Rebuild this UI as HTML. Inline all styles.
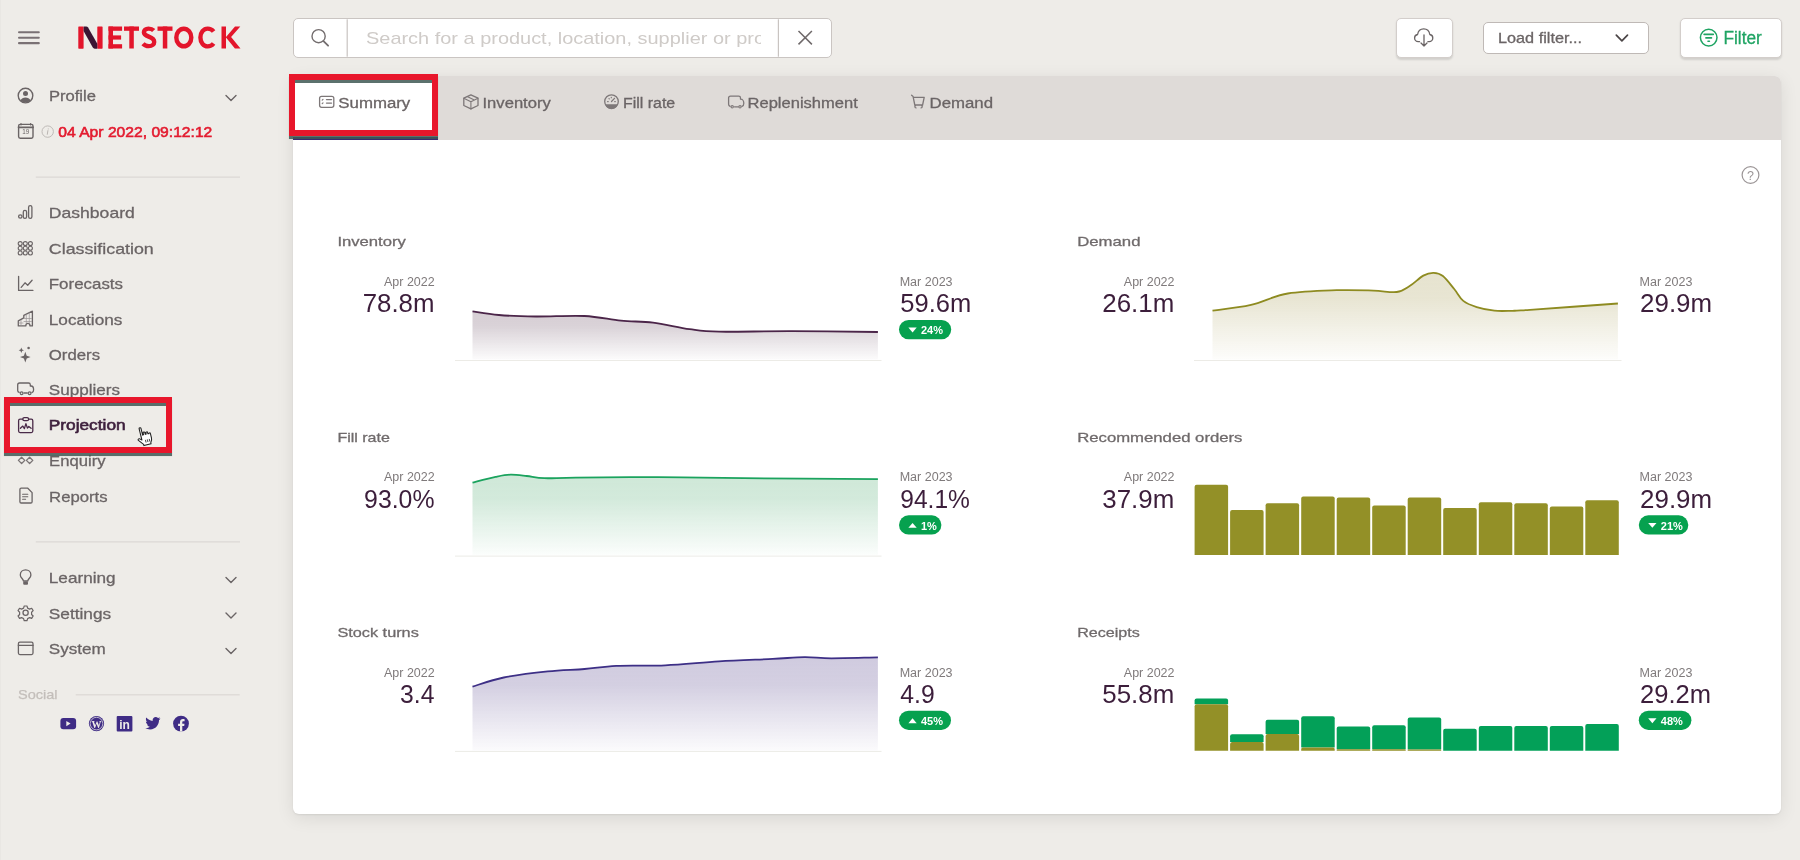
<!DOCTYPE html>
<html><head><meta charset="utf-8">
<style>
html,body{margin:0;padding:0;}
body{width:1800px;height:860px;overflow:hidden;background:#eeece8;position:relative;font-family:"Liberation Sans",sans-serif;}
.abs{position:absolute;}
#card{left:292.5px;top:76.3px;width:1488.8px;height:737.4px;background:#fff;border-radius:6px;box-shadow:0 1px 2px rgba(0,0,0,0.07), 0 4px 18px rgba(0,0,0,0.09);overflow:hidden;}
#tabbar{left:0;top:0;width:1489px;height:63.5px;background:#dfdbd8;}
#tabsum{left:0;top:0;width:145px;height:60.5px;background:#fff;}
#tabline{left:0;top:60.5px;width:145px;height:3px;background:#3b2870;}
.search{left:293px;top:18.3px;width:537.2px;height:37.6px;border:1.5px solid #cac5c2;border-radius:5px;background:#fff;}
.btn{background:#fff;border:1.3px solid #d3cecb;border-radius:5px;box-shadow:0 1.5px 2px rgba(0,0,0,0.12);}
#dl{left:1396.3px;top:17.8px;width:54.4px;height:38.6px;}
#flt{left:1680.4px;top:17.8px;width:99.4px;height:38.6px;}
#load{left:1483.3px;top:22.3px;width:163.5px;height:29.5px;border:1.3px solid #bfb9b6;border-radius:5px;background:#fff;}
.redbox{border:6px solid #e8162b;box-shadow:0 2.8px 0.6px rgba(62,88,84,0.85), inset 0 3px 0.6px rgba(62,88,84,0.85);}
#rb1{left:4px;top:397.3px;width:155.8px;height:44.2px;}
#rb2{left:289.2px;top:73.7px;width:136.8px;height:50.1px;}
svg{position:absolute;left:0;top:0;will-change:transform;}
</style></head>
<body>
<div class="abs" style="left:0;top:0;width:1px;height:860px;background:#e9e7e3"></div>
<div class="abs" id="card">
  <div class="abs" id="tabbar"></div>
  <div class="abs" id="tabsum"></div>
  <div class="abs" id="tabline"></div>
</div>
<div class="abs search"></div>
<div class="abs btn" id="dl"></div>
<div class="abs btn" id="flt"></div>
<div class="abs" id="load"></div>

<svg width="1800" height="860" viewBox="0 0 1800 860" font-family="Liberation Sans, sans-serif">
<defs><linearGradient id="g1" x1="0" y1="0" x2="0" y2="1"><stop offset="0" stop-color="#d6ced4"/><stop offset="0.3" stop-color="#d6ced4" stop-opacity="0.92"/><stop offset="1" stop-color="#d6ced4" stop-opacity="0.08"/></linearGradient><linearGradient id="g2" x1="0" y1="0" x2="0" y2="1"><stop offset="0" stop-color="#e6e3cf"/><stop offset="0.3" stop-color="#e6e3cf" stop-opacity="0.92"/><stop offset="1" stop-color="#e6e3cf" stop-opacity="0.08"/></linearGradient><linearGradient id="g3" x1="0" y1="0" x2="0" y2="1"><stop offset="0" stop-color="#cfe8d8"/><stop offset="0.3" stop-color="#cfe8d8" stop-opacity="0.92"/><stop offset="1" stop-color="#cfe8d8" stop-opacity="0.08"/></linearGradient><linearGradient id="g4" x1="0" y1="0" x2="0" y2="1"><stop offset="0" stop-color="#d0cbdf"/><stop offset="0.3" stop-color="#d0cbdf" stop-opacity="0.92"/><stop offset="1" stop-color="#d0cbdf" stop-opacity="0.08"/></linearGradient></defs>
<rect x="455" y="360.0" width="426.5" height="1" fill="#ecebe6"/>
<path d="M472.5 311.4 C476.9 312.0 488.4 314.1 498.9 315.0 C509.4 315.9 521.3 316.3 535.6 316.5 C549.9 316.7 570.3 315.3 584.5 316.0 C598.7 316.7 609.6 319.6 621.0 320.7 C632.4 321.8 641.6 321.2 653.0 322.6 C664.4 324.0 678.6 327.7 689.6 329.2 C700.6 330.7 701.9 331.4 719.0 331.7 C736.1 332.0 765.8 331.1 792.3 331.2 C818.8 331.2 863.6 331.9 877.9 332.0 L877.9 359.5 L472.5 359.5 Z" fill="url(#g1)"/>
<path d="M472.5 311.4 C476.9 312.0 488.4 314.1 498.9 315.0 C509.4 315.9 521.3 316.3 535.6 316.5 C549.9 316.7 570.3 315.3 584.5 316.0 C598.7 316.7 609.6 319.6 621.0 320.7 C632.4 321.8 641.6 321.2 653.0 322.6 C664.4 324.0 678.6 327.7 689.6 329.2 C700.6 330.7 701.9 331.4 719.0 331.7 C736.1 332.0 765.8 331.1 792.3 331.2 C818.8 331.2 863.6 331.9 877.9 332.0" fill="none" stroke="#4b2549" stroke-width="1.8"/>
<rect x="1194" y="360.0" width="427.5" height="1" fill="#ecebe6"/>
<path d="M1212.5 310.6 C1218.9 309.7 1238.5 307.8 1251.0 304.9 C1263.5 302.0 1273.5 295.9 1287.8 293.5 C1302.1 291.1 1322.4 290.7 1336.7 290.2 C1351.0 289.7 1363.4 290.3 1373.4 290.6 C1383.4 290.9 1390.6 292.8 1396.7 292.0 C1402.8 291.2 1405.6 288.5 1410.0 285.8 C1414.4 283.1 1419.4 277.8 1423.3 275.6 C1427.2 273.5 1430.3 272.8 1433.6 272.9 C1436.9 273.0 1439.4 273.3 1442.9 276.0 C1446.4 278.7 1451.0 285.2 1454.4 289.3 C1457.8 293.4 1459.6 297.9 1463.3 300.9 C1467.0 303.9 1471.5 305.5 1476.7 307.1 C1481.9 308.7 1488.5 310.1 1494.4 310.7 C1500.3 311.3 1506.3 310.9 1512.2 310.8 C1518.1 310.7 1512.4 311.0 1530.0 309.8 C1547.6 308.6 1603.2 304.6 1617.9 303.5 L1617.9 359.5 L1212.5 359.5 Z" fill="url(#g2)"/>
<path d="M1212.5 310.6 C1218.9 309.7 1238.5 307.8 1251.0 304.9 C1263.5 302.0 1273.5 295.9 1287.8 293.5 C1302.1 291.1 1322.4 290.7 1336.7 290.2 C1351.0 289.7 1363.4 290.3 1373.4 290.6 C1383.4 290.9 1390.6 292.8 1396.7 292.0 C1402.8 291.2 1405.6 288.5 1410.0 285.8 C1414.4 283.1 1419.4 277.8 1423.3 275.6 C1427.2 273.5 1430.3 272.8 1433.6 272.9 C1436.9 273.0 1439.4 273.3 1442.9 276.0 C1446.4 278.7 1451.0 285.2 1454.4 289.3 C1457.8 293.4 1459.6 297.9 1463.3 300.9 C1467.0 303.9 1471.5 305.5 1476.7 307.1 C1481.9 308.7 1488.5 310.1 1494.4 310.7 C1500.3 311.3 1506.3 310.9 1512.2 310.8 C1518.1 310.7 1512.4 311.0 1530.0 309.8 C1547.6 308.6 1603.2 304.6 1617.9 303.5" fill="none" stroke="#8e8b21" stroke-width="1.8"/>
<rect x="455" y="555.6" width="426.5" height="1" fill="#ecebe6"/>
<path d="M472.5 482.7 C476.4 481.7 489.2 478.2 495.6 476.9 C502.0 475.6 505.5 474.8 510.7 474.7 C515.9 474.6 521.1 475.4 526.7 476.0 C532.3 476.6 536.2 477.9 544.4 478.2 C552.5 478.5 556.7 477.8 575.6 477.6 C594.5 477.4 629.8 477.1 657.8 477.2 C685.8 477.3 706.7 477.9 743.4 478.2 C780.1 478.5 855.5 479.0 877.9 479.2 L877.9 555 L472.5 555 Z" fill="url(#g3)"/>
<path d="M472.5 482.7 C476.4 481.7 489.2 478.2 495.6 476.9 C502.0 475.6 505.5 474.8 510.7 474.7 C515.9 474.6 521.1 475.4 526.7 476.0 C532.3 476.6 536.2 477.9 544.4 478.2 C552.5 478.5 556.7 477.8 575.6 477.6 C594.5 477.4 629.8 477.1 657.8 477.2 C685.8 477.3 706.7 477.9 743.4 478.2 C780.1 478.5 855.5 479.0 877.9 479.2" fill="none" stroke="#1ba35e" stroke-width="1.8"/>
<rect x="455" y="750.9" width="426.5" height="1" fill="#ecebe6"/>
<path d="M472.5 686.6 C477.7 685.1 491.2 680.0 503.8 677.5 C516.4 675.0 534.3 672.8 547.8 671.4 C561.2 670.0 573.1 669.9 584.5 669.0 C595.9 668.1 602.8 666.4 616.3 665.8 C629.8 665.2 648.1 666.0 665.2 665.3 C682.3 664.6 701.1 662.5 719.0 661.4 C736.9 660.3 758.5 659.6 772.7 658.9 C787.0 658.2 794.7 657.3 804.5 657.2 C814.3 657.1 819.2 658.3 831.4 658.3 C843.6 658.3 870.1 657.5 877.9 657.4 L877.9 750.5 L472.5 750.5 Z" fill="url(#g4)"/>
<path d="M472.5 686.6 C477.7 685.1 491.2 680.0 503.8 677.5 C516.4 675.0 534.3 672.8 547.8 671.4 C561.2 670.0 573.1 669.9 584.5 669.0 C595.9 668.1 602.8 666.4 616.3 665.8 C629.8 665.2 648.1 666.0 665.2 665.3 C682.3 664.6 701.1 662.5 719.0 661.4 C736.9 660.3 758.5 659.6 772.7 658.9 C787.0 658.2 794.7 657.3 804.5 657.2 C814.3 657.1 819.2 658.3 831.4 658.3 C843.6 658.3 870.1 657.5 877.9 657.4" fill="none" stroke="#3d2f86" stroke-width="1.8"/>
<path d="M1194.6 555.1 V486.7 Q1194.6 484.7 1196.6 484.7 H1226.1 Q1228.1 484.7 1228.1 486.7 V555.1 Z" fill="#939027"/>
<path d="M1230.1 555.1 V512 Q1230.1 510 1232.1 510 H1261.6 Q1263.6 510 1263.6 512 V555.1 Z" fill="#939027"/>
<path d="M1265.6 555.1 V505.2 Q1265.6 503.2 1267.6 503.2 H1297.1 Q1299.1 503.2 1299.1 505.2 V555.1 Z" fill="#939027"/>
<path d="M1301.2 555.1 V498.6 Q1301.2 496.6 1303.2 496.6 H1332.7 Q1334.7 496.6 1334.7 498.6 V555.1 Z" fill="#939027"/>
<path d="M1336.7 555.1 V499.5 Q1336.7 497.5 1338.7 497.5 H1368.2 Q1370.2 497.5 1370.2 499.5 V555.1 Z" fill="#939027"/>
<path d="M1372.2 555.1 V507.5 Q1372.2 505.5 1374.2 505.5 H1403.7 Q1405.7 505.5 1405.7 507.5 V555.1 Z" fill="#939027"/>
<path d="M1407.7 555.1 V499.5 Q1407.7 497.5 1409.7 497.5 H1439.2 Q1441.2 497.5 1441.2 499.5 V555.1 Z" fill="#939027"/>
<path d="M1443.2 555.1 V510 Q1443.2 508 1445.2 508 H1474.7 Q1476.7 508 1476.7 510 V555.1 Z" fill="#939027"/>
<path d="M1478.8 555.1 V504.2 Q1478.8 502.2 1480.8 502.2 H1510.3 Q1512.3 502.2 1512.3 504.2 V555.1 Z" fill="#939027"/>
<path d="M1514.3 555.1 V505.3 Q1514.3 503.3 1516.3 503.3 H1545.8 Q1547.8 503.3 1547.8 505.3 V555.1 Z" fill="#939027"/>
<path d="M1549.8 555.1 V508.5 Q1549.8 506.5 1551.8 506.5 H1581.3 Q1583.3 506.5 1583.3 508.5 V555.1 Z" fill="#939027"/>
<path d="M1585.3 555.1 V502.2 Q1585.3 500.2 1587.3 500.2 H1616.8 Q1618.8 500.2 1618.8 502.2 V555.1 Z" fill="#939027"/>
<path d="M1194.6 704.2 V700.4 Q1194.6 698.4 1196.6 698.4 H1226.1 Q1228.1 698.4 1228.1 700.4 V704.2 Z" fill="#03a058"/>
<path d="M1194.6 750.8 V706.2 Q1194.6 704.2 1196.6 704.2 H1226.1 Q1228.1 704.2 1228.1 706.2 V750.8 Z" fill="#939027"/>
<path d="M1230.1 741.9 V736.2 Q1230.1 734.2 1232.1 734.2 H1261.6 Q1263.6 734.2 1263.6 736.2 V741.9 Z" fill="#03a058"/>
<path d="M1230.1 750.8 V743.9 Q1230.1 741.9 1232.1 741.9 H1261.6 Q1263.6 741.9 1263.6 743.9 V750.8 Z" fill="#939027"/>
<path d="M1265.6 733.9 V721.8 Q1265.6 719.8 1267.6 719.8 H1297.1 Q1299.1 719.8 1299.1 721.8 V733.9 Z" fill="#03a058"/>
<path d="M1265.6 750.8 V735.9 Q1265.6 733.9 1267.6 733.9 H1297.1 Q1299.1 733.9 1299.1 735.9 V750.8 Z" fill="#939027"/>
<path d="M1301.2 747.4 V718.3 Q1301.2 716.3 1303.2 716.3 H1332.7 Q1334.7 716.3 1334.7 718.3 V747.4 Z" fill="#03a058"/>
<path d="M1301.2 750.8 V749.0999999999999 Q1301.2 747.4 1302.9 747.4 H1333.0 Q1334.7 747.4 1334.7 749.0999999999999 V750.8 Z" fill="#939027"/>
<path d="M1336.7 749.3 V728.5 Q1336.7 726.5 1338.7 726.5 H1368.2 Q1370.2 726.5 1370.2 728.5 V749.3 Z" fill="#03a058"/>
<path d="M1336.7 750.8 V750.05 Q1336.7 749.3 1337.4 749.3 H1369.4 Q1370.2 749.3 1370.2 750.05 V750.8 Z" fill="#939027"/>
<path d="M1372.2 749.3 V727.3 Q1372.2 725.3 1374.2 725.3 H1403.7 Q1405.7 725.3 1405.7 727.3 V749.3 Z" fill="#03a058"/>
<path d="M1372.2 750.8 V750.05 Q1372.2 749.3 1372.9 749.3 H1404.9 Q1405.7 749.3 1405.7 750.05 V750.8 Z" fill="#939027"/>
<path d="M1407.7 749.5 V719.6 Q1407.7 717.6 1409.7 717.6 H1439.2 Q1441.2 717.6 1441.2 719.6 V749.5 Z" fill="#03a058"/>
<path d="M1407.7 750.8 V750.15 Q1407.7 749.5 1408.4 749.5 H1440.6 Q1441.2 749.5 1441.2 750.15 V750.8 Z" fill="#939027"/>
<path d="M1443.2 750.8 V730.7 Q1443.2 728.7 1445.2 728.7 H1474.7 Q1476.7 728.7 1476.7 730.7 V750.8 Z" fill="#03a058"/>
<path d="M1478.8 750.8 V728.1 Q1478.8 726.1 1480.8 726.1 H1510.3 Q1512.3 726.1 1512.3 728.1 V750.8 Z" fill="#03a058"/>
<path d="M1514.3 750.8 V728.1 Q1514.3 726.1 1516.3 726.1 H1545.8 Q1547.8 726.1 1547.8 728.1 V750.8 Z" fill="#03a058"/>
<path d="M1549.8 750.8 V728.1 Q1549.8 726.1 1551.8 726.1 H1581.3 Q1583.3 726.1 1583.3 728.1 V750.8 Z" fill="#03a058"/>
<path d="M1585.3 750.8 V726 Q1585.3 724 1587.3 724 H1616.8 Q1618.8 724 1618.8 726 V750.8 Z" fill="#03a058"/>
<g id="icons">
<!-- hamburger -->
<g fill="#7a7174">
<rect x="18" y="31.2" width="21.8" height="2.1" rx="1"/>
<rect x="18" y="36.7" width="21.8" height="2.1" rx="1"/>
<rect x="18" y="42.1" width="21.8" height="2.1" rx="1"/>
</g>
<!-- logo -->
<g fill="#e3152b">
<rect x="78.3" y="26.4" width="5.3" height="22.3" rx="0.6"/>
<rect x="97.3" y="26.4" width="5.3" height="22.3" rx="0.6"/>
<rect x="108.5" y="26.5" width="4.5" height="22"/>
<rect x="108.5" y="26.5" width="13.6" height="4.3"/>
<rect x="108.5" y="35.4" width="12.6" height="4.2"/>
<rect x="108.5" y="44.2" width="13.6" height="4.3"/>
<rect x="124" y="26.5" width="15" height="4.3"/>
<rect x="129.3" y="26.5" width="4.5" height="22"/>
<rect x="157.5" y="26.5" width="15" height="4.3"/>
<rect x="162.8" y="26.5" width="4.5" height="22"/>
<rect x="221.5" y="26.5" width="4.5" height="22"/>
<path d="M235 26.5h5.3l-9.2 10.6 9.4 11.4h-5.6l-9.1-11.2z"/>
</g>
<path d="M83.6 26.4h2.6c.8 0 1.5.4 1.9 1.1l9.2 16.3v4.9h-2.6c-.8 0-1.5-.4-1.9-1.1l-9.2-16.6z" fill="#3a1433"/>
<g fill="none" stroke="#e3152b" stroke-width="4.4">
<path d="M153.7 30.6c-1.3-1.4-3.2-2-5.2-2-2.9 0-4.6 1.6-4.6 3.7 0 5.3 10.3 3.4 10.3 9.6 0 2.4-2 4.2-5.4 4.2-2.3 0-4.3-.8-5.8-2.4"/>
<ellipse cx="183.8" cy="37.5" rx="7.5" ry="8.8"/>
<path d="M213.6 31.5c-1.5-1.9-3.6-2.9-5.9-2.9-4.2 0-7.3 3.9-7.3 8.9s3.1 8.9 7.3 8.9c2.3 0 4.4-1 5.9-2.9"/>
</g>

<!-- sidebar icons -->
<g fill="none" stroke="#6a6465" stroke-width="1.4" stroke-linecap="round" stroke-linejoin="round">
  <!-- profile -->
  <circle cx="25.5" cy="95.6" r="7.3"/>
  <!-- calendar -->
  <rect x="18.6" y="124.4" width="14.4" height="13.8" rx="1.6"/>
  <path d="M18.6 127.3h14.4" stroke-width="1.8"/>
  <path d="M21 123.6v1.4M30.6 123.6v1.4" stroke-width="1.2"/>
  <!-- dashboard -->
  <circle cx="20.3" cy="216.5" r="1.7" stroke-width="1.3"/>
  <rect x="23.3" y="210.3" width="3.3" height="8" rx="1.6" stroke-width="1.3"/>
  <rect x="28.6" y="205.7" width="3.3" height="12.6" rx="1.6" stroke-width="1.3"/>
  <!-- forecasts -->
  <path d="M18.6 276.3v14.1h14.3" stroke-width="1.3"/>
  <path d="M21.2 287.4l3.8-4.6 2.7 2.5 4.4-5" stroke-width="1.3"/>
  <!-- locations -->
  <path d="M18.3 325.9v-5l5.5-3v-2.6l8.6-4.1v14.7h-2.4c0-1.5-.9-2.6-2.1-2.6s-2.1 1.1-2.1 2.6z" stroke-width="1.3"/><path d="M21 320.5v5M26.3 314.5v8.5M29.3 313v10.5M24 318.5h7.5M24 321.5h7.5M19 323h4" stroke-width="0.7" stroke="#9a9495"/>
  <!-- suppliers truck -->
  <path d="M19.2 392.4c-.9-.3-1.5-1-1.5-2v-5.5c0-1.1.8-1.9 1.9-1.9h8.9c1 0 1.8.8 1.8 1.8v1.2h.7c1.4 0 2.6 1.6 2.6 3.7 0 1.5-.6 2.6-1.6 2.8M24 393h3.3" stroke-width="1.3"/>
  <circle cx="21.6" cy="393.3" r="1.4" stroke-width="1.2"/>
  <circle cx="29.6" cy="393.3" r="1.4" stroke-width="1.2"/>
  <!-- enquiry glasses -->
  <path d="M21.6 457.3l3.2 3.1-3.2 3.1-3.2-3.1z" stroke="#7a7475" stroke-width="1.3"/>
  <path d="M29.6 457.3l3.2 3.1-3.2 3.1-3.2-3.1z" stroke="#7a7475" stroke-width="1.3"/>
  <!-- reports -->
  <path d="M21.2 488.2h6.6l4.3 4.4v9.1c0 .8-.6 1.3-1.3 1.3h-9.6c-.8 0-1.3-.6-1.3-1.3v-12.2c0-.8.6-1.3 1.3-1.3z" stroke-width="1.3"/>
  <path d="M22.6 494.3h5.2M22.6 496.8h5.2M22.6 499.3h3" stroke-width="1.1"/>
  <!-- learning bulb -->
  <path d="M23.4 581c0-2-3.1-3.2-3.1-6.1 0-3 2.4-5.1 5.3-5.1s5.3 2.1 5.3 5.1c0 2.9-3.1 4.1-3.1 6.1z" stroke-width="1.3"/>
  <!-- settings gear -->
  <path transform="translate(25.6 612.8) scale(0.92) translate(-25.6 -612.8)" d="M24.1 605.4h3l.7 2.3 2.2 1.1 2.2-.9 1.6 2.6-1.7 1.7v2.4l1.7 1.7-1.6 2.6-2.2-.9-2.2 1.1-.7 2.3h-3l-.7-2.3-2.2-1.1-2.2.9-1.6-2.6 1.7-1.7v-2.4l-1.7-1.7 1.6-2.6 2.2.9 2.2-1.1z" stroke-width="1.3"/>
  <circle cx="25.6" cy="612.8" r="2.6" stroke-width="1.3"/>
  <!-- system window -->
  <rect x="18.4" y="642.2" width="14.6" height="12.4" rx="1.5" stroke-width="1.3"/>
  <path d="M18.4 645.4h14.6" stroke-width="1.3"/>
</g>
<g fill="#6a6465">
  <!-- profile head/body -->
  <circle cx="25.5" cy="93.5" r="2.5"/>
  <path d="M20.3 100.5c1.1-1.9 3-2.9 5.2-2.9s4.1 1 5.2 2.9c-1.3 1.3-3.2 2.1-5.2 2.1s-3.9-.8-5.2-2.1z"/>
  <text x="25.8" y="134.3" font-size="6.3" text-anchor="middle" fill="#6a6465">19</text>
  <!-- classification grid -->
  <g fill="none" stroke="#6a6465" stroke-width="1.1">
    <circle cx="20.2" cy="243.6" r="2"/><circle cx="25.3" cy="243.6" r="2"/><circle cx="30.4" cy="243.6" r="2"/>
    <circle cx="20.2" cy="248.3" r="2"/><circle cx="25.3" cy="248.3" r="2"/><circle cx="30.4" cy="248.3" r="2"/>
    <circle cx="20.2" cy="253" r="2"/><circle cx="25.3" cy="253" r="2"/><circle cx="30.4" cy="253" r="2"/>
  </g>
  <!-- orders sparkles -->
  <path d="M25.3 351.8l1.4 3.9 3.9 1.4-3.9 1.4-1.4 3.9-1.4-3.9-3.9-1.4 3.9-1.4z"/>
  <path d="M21.3 347.6l.8 1.9 1.9.8-1.9.8-.8 1.9-.8-1.9-1.9-.8 1.9-.8z"/>
  <circle cx="28.6" cy="348" r="1.3"/>
  <!-- bulb base -->
  <rect x="23.2" y="581.6" width="4.8" height="3.2" rx="1"/>
</g>
<!-- info icon -->
<circle cx="47.7" cy="131.6" r="5.7" fill="none" stroke="#b9b4b1" stroke-width="0.9"/>
<path d="M48.3 128.9v.1M47.9 130.6l-.6 3.7" stroke="#b9b4b1" stroke-width="1" stroke-linecap="round"/>
<!-- projection icon (purple) -->
<g fill="none" stroke="#4a2a48" stroke-width="1.3" stroke-linecap="round" stroke-linejoin="round">
  <path d="M22.8 419.2h-2.7c-.9 0-1.5.7-1.5 1.5v10.4c0 .9.7 1.5 1.5 1.5h11.2c.9 0 1.5-.7 1.5-1.5v-10.4c0-.9-.7-1.5-1.5-1.5h-2.7"/>
  <rect x="22.8" y="417.7" width="5.8" height="3" rx="1.5"/>
  <path d="M20.4 428.3l2.4-2.2 1.6 2.5 1.5-5 1.5 4.5 1.4-1.6 2.3 1.8"/>
</g>

<!-- chevrons sidebar -->
<g fill="none" stroke="#6a6465" stroke-width="1.4" stroke-linecap="round" stroke-linejoin="round">
  <path d="M226 95.5l5 5 5-5"/>
  <path d="M226 577.5l5 5 5-5"/>
  <path d="M226 613l5 5 5-5"/>
  <path d="M226 648.5l5 5 5-5"/>
</g>
<!-- dividers -->
<rect x="35.8" y="176.5" width="204.2" height="1.2" fill="#dbd8d4"/>
<rect x="35.8" y="541.3" width="204.2" height="1.2" fill="#dbd8d4"/>
<rect x="75.7" y="694.2" width="164" height="1.2" fill="#dbd8d4"/>

<!-- social icons -->
<g fill="#3f2c85">
  <rect x="60.4" y="718" width="15.7" height="11.2" rx="3"/>
  <path d="M66.3 721v5.2l4.3-2.6z" fill="#eeece8"/>
  <circle cx="96.5" cy="723.6" r="7.6"/>
  <circle cx="96.5" cy="723.6" r="6.3" fill="none" stroke="#eeece8" stroke-width="0.7"/>
  <text x="96.5" y="727.5" font-size="10" font-weight="700" text-anchor="middle" fill="#eeece8" font-family="Liberation Serif, serif">W</text>
  <rect x="116.7" y="716" width="15.7" height="15.4" rx="1"/>
  <text x="124.6" y="729.3" font-size="12" font-weight="700" text-anchor="middle" fill="#eeece8">in</text>
  <path d="M160.4 719.5c-.6.3-1.2.4-1.8.5.7-.4 1.1-1 1.4-1.7-.6.4-1.3.6-2 .8-.6-.6-1.4-1-2.3-1-1.7 0-3.1 1.4-3.1 3.1 0 .2 0 .5.1.7-2.6-.1-4.9-1.4-6.4-3.3-.3.5-.4 1-.4 1.6 0 1.1.6 2 1.4 2.6-.5 0-1-.2-1.4-.4 0 1.5 1.1 2.8 2.5 3.1-.3.1-.5.1-.8.1-.2 0-.4 0-.6-.1.4 1.2 1.5 2.1 2.9 2.2-1.1.8-2.4 1.3-3.9 1.3h-.7c1.4.9 3 1.4 4.8 1.4 5.7 0 8.9-4.8 8.9-8.9v-.4c.6-.4 1.1-1 1.4-1.6z" transform="translate(0,-1)"/>
  <circle cx="181" cy="723.6" r="7.9"/>
  <path d="M182.3 731.5v-5.6h1.9l.3-2.2h-2.2v-1.4c0-.6.2-1.1 1.1-1.1h1.2v-2c-.2 0-.9-.1-1.7-.1-1.7 0-2.9 1-2.9 3v1.6h-1.9v2.2h1.9v5.6z" fill="#eeece8"/>
</g>

<!-- cursor hand -->
<g transform="translate(133.5,428.5) rotate(-14) scale(0.98)">
<path d="M5.5 1.5c0-.9 1.9-.9 1.9 0v7.3l1-.2v-1.9c0-.8 1.8-.8 1.8 0v2l1-.1v-1.4c0-.8 1.8-.8 1.8 0v1.6l.8.1c0-.8 1.7-.8 1.7 0v4.7c0 2.2-.9 3.6-1.9 4.7v1.2h-7.5v-1.3l-4.2-5.2c-.6-.7.5-2 1.7-1.2l1.9 1.7z" fill="#fff" stroke="#222" stroke-width="1.1" stroke-linejoin="round"/>
<path d="M9 14.2v2.8M11 14.2v2.8M13 14.2v2.8" stroke="#222" stroke-width="0.8"/>
</g>

<!-- top bar icons -->
<g fill="none" stroke="#736d6e" stroke-width="1.4" stroke-linecap="round">
  <circle cx="318.6" cy="36.2" r="6.6"/>
  <path d="M323.5 41.1l4.6 4.6" stroke-width="1.8"/>
</g>
<rect x="346.6" y="19.3" width="1.2" height="37.4" fill="#c9c4c1"/>
<rect x="777.8" y="19.3" width="1.2" height="37.4" fill="#c9c4c1"/>
<path d="M798.5 31l13.4 13.4M811.9 31l-13.4 13.4" stroke="#6f696a" stroke-width="1.5"/>
<!-- cloud download -->
<g fill="none" stroke="#6a6465" stroke-width="1.3" stroke-linecap="round" stroke-linejoin="round">
  <path d="M1419.5 41.7h-1.3c-2 0-3.6-1.6-3.6-3.6 0-1.8 1.3-3.3 3-3.6.5-3.3 3-5.6 6.1-5.6s5.6 2.3 6.1 5.6c1.7.3 3 1.8 3 3.6 0 2-1.6 3.6-3.6 3.6h-1.3"/>
  <path d="M1424 35v11M1421 43l3 3 3-3"/>
</g>
<!-- load filter chevron -->
<path d="M1616.3 35.2l5.6 5.6 5.6-5.6" fill="none" stroke="#4b4546" stroke-width="1.7" stroke-linecap="round" stroke-linejoin="round"/>
<!-- filter icon -->
<g fill="none" stroke="#1fa463" stroke-width="1.5" stroke-linecap="round">
  <circle cx="1708.7" cy="37.6" r="8.3"/>
  <path d="M1704.1 34.4h9.2M1705.9 37.9h5.6M1708 41.3h1.4" stroke-width="1.6"/>
</g>
<!-- help -->
<circle cx="1750.5" cy="175" r="8.4" fill="none" stroke="#9b9596" stroke-width="1.2"/>
<text x="1750.5" y="179.6" font-size="12.5" text-anchor="middle" fill="#9b9596">?</text>

<!-- tab icons -->
<g fill="none" stroke="#7d7778" stroke-width="1.3" stroke-linecap="round" stroke-linejoin="round">
  <!-- summary card -->
  <rect x="319.6" y="96.3" width="14.2" height="11" rx="2"/>
  <path d="M322.2 100.2l.8-.8M322.2 103.6l.8-.8" stroke-width="1.2"/>
  <path d="M326.5 99.6h5M326.5 103.1h5" stroke-width="1.4"/>
  <!-- cube -->
  <path d="M470.9 94.8l7.1 3.4v7.3l-7.1 3.4-7.1-3.4v-7.3z"/>
  <path d="M463.8 98.2l7.1 3.5 7.1-3.5M470.9 101.7v7.2M467.2 96.5l7.1 3.5" stroke-width="1.1"/>
  <!-- truck -->
  <path d="M730.1 106.3c-.9-.3-1.5-1-1.5-2v-6.3c0-1.1.8-1.9 1.9-1.9h8.2c1 0 1.8.8 1.8 1.8v1.3h.3c1.6 0 3 1.8 3 4 0 1.5-.7 2.8-1.8 3.2M734.5 106.8h3.8"/>
  <circle cx="732.2" cy="106.8" r="1.2" stroke-width="1.1"/>
  <circle cx="740" cy="106.8" r="1.2" stroke-width="1.1"/>
  <!-- cart -->
  <path d="M911.6 95.3l1.5 1.3 1.7 8.4h7.8l1.6-7.6h-10.6M915.6 105.3c-1 .5-1 2.6.4 2.6M921.5 105.3c1 .5 1 2.6-.4 2.6"/>
</g>
<!-- gauge -->
<circle cx="611.5" cy="101.6" r="6.8" fill="none" stroke="#7d7778" stroke-width="1.3"/>
<path d="M605.2 104.3h12.6c-.6 2.7-3.2 4.9-6.3 4.9s-5.7-2.2-6.3-4.9z" fill="#7d7778"/>
<path d="M611.5 101.5l3-3.2M607.6 101.6h.6M615.3 101.6h-.6M609 98.6l.3.3M611.3 97.3v.4" stroke="#7d7778" stroke-width="1.2" stroke-linecap="round"/>
</g>

<text x="48.9" y="101" font-size="15" fill="#6a6465" stroke="#6a6465" stroke-width="0.28" text-anchor="start" textLength="47" lengthAdjust="spacingAndGlyphs">Profile</text>
<text x="58.3" y="136.5" font-size="15" fill="#e31b2f" stroke="#e31b2f" stroke-width="0.6" text-anchor="start" textLength="154" lengthAdjust="spacingAndGlyphs">04 Apr 2022, 09:12:12</text>
<text x="48.8" y="218" font-size="15" fill="#6a6465" stroke="#6a6465" stroke-width="0.28" text-anchor="start" textLength="86" lengthAdjust="spacingAndGlyphs">Dashboard</text>
<text x="48.8" y="253.6" font-size="15" fill="#6a6465" stroke="#6a6465" stroke-width="0.28" text-anchor="start" textLength="105" lengthAdjust="spacingAndGlyphs">Classification</text>
<text x="48.8" y="289.4" font-size="15" fill="#6a6465" stroke="#6a6465" stroke-width="0.28" text-anchor="start" textLength="74.2" lengthAdjust="spacingAndGlyphs">Forecasts</text>
<text x="48.8" y="324.7" font-size="15" fill="#6a6465" stroke="#6a6465" stroke-width="0.28" text-anchor="start" textLength="73.6" lengthAdjust="spacingAndGlyphs">Locations</text>
<text x="48.8" y="359.9" font-size="15" fill="#6a6465" stroke="#6a6465" stroke-width="0.28" text-anchor="start" textLength="51.3" lengthAdjust="spacingAndGlyphs">Orders</text>
<text x="48.8" y="395.2" font-size="15" fill="#6a6465" stroke="#6a6465" stroke-width="0.28" text-anchor="start" textLength="71.3" lengthAdjust="spacingAndGlyphs">Suppliers</text>
<text x="48.8" y="430.2" font-size="15" fill="#3d1f3c" stroke="#3d1f3c" stroke-width="0.6" text-anchor="start" textLength="76.8" lengthAdjust="spacingAndGlyphs">Projection</text>
<text x="49.1" y="466.3" font-size="15" fill="#6a6465" stroke="#6a6465" stroke-width="0.28" text-anchor="start" textLength="56.4" lengthAdjust="spacingAndGlyphs">Enquiry</text>
<text x="49.1" y="501.6" font-size="15" fill="#6a6465" stroke="#6a6465" stroke-width="0.28" text-anchor="start" textLength="58.5" lengthAdjust="spacingAndGlyphs">Reports</text>
<text x="48.8" y="583.2" font-size="15" fill="#6a6465" stroke="#6a6465" stroke-width="0.28" text-anchor="start" textLength="66.8" lengthAdjust="spacingAndGlyphs">Learning</text>
<text x="48.8" y="618.7" font-size="15" fill="#6a6465" stroke="#6a6465" stroke-width="0.28" text-anchor="start" textLength="62.4" lengthAdjust="spacingAndGlyphs">Settings</text>
<text x="48.8" y="654" font-size="15" fill="#6a6465" stroke="#6a6465" stroke-width="0.28" text-anchor="start" textLength="57" lengthAdjust="spacingAndGlyphs">System</text>
<text x="18" y="698.5" font-size="13" fill="#c3beba" stroke="#c3beba" stroke-width="0.25" text-anchor="start" textLength="39.6" lengthAdjust="spacingAndGlyphs">Social</text>
<clipPath id="sclip"><rect x="348" y="20" width="413" height="36"/></clipPath>
<text x="366" y="43.9" font-size="17" fill="#cfcbc8" text-anchor="start" textLength="399" lengthAdjust="spacingAndGlyphs" clip-path="url(#sclip)">Search for a product, location, supplier or pro</text>
<text x="1498" y="43" font-size="14.5" fill="#6a6465" stroke="#6a6465" stroke-width="0.28" text-anchor="start" textLength="84" lengthAdjust="spacingAndGlyphs">Load filter...</text>
<text x="1723.4" y="44.2" font-size="17.5" fill="#1fa463" stroke="#1fa463" stroke-width="0.28" text-anchor="start" textLength="38.5" lengthAdjust="spacingAndGlyphs">Filter</text>
<text x="338.3" y="107.5" font-size="14" fill="#6a6465" stroke="#6a6465" stroke-width="0.28" text-anchor="start" textLength="72" lengthAdjust="spacingAndGlyphs">Summary</text>
<text x="482.5" y="107.5" font-size="14" fill="#6a6465" stroke="#6a6465" stroke-width="0.28" text-anchor="start" textLength="68.3" lengthAdjust="spacingAndGlyphs">Inventory</text>
<text x="623" y="107.5" font-size="14" fill="#6a6465" stroke="#6a6465" stroke-width="0.28" text-anchor="start" textLength="52.2" lengthAdjust="spacingAndGlyphs">Fill rate</text>
<text x="747.5" y="107.5" font-size="14" fill="#6a6465" stroke="#6a6465" stroke-width="0.28" text-anchor="start" textLength="110.3" lengthAdjust="spacingAndGlyphs">Replenishment</text>
<text x="929.5" y="107.5" font-size="14" fill="#6a6465" stroke="#6a6465" stroke-width="0.28" text-anchor="start" textLength="63.5" lengthAdjust="spacingAndGlyphs">Demand</text>
<text x="337.4" y="246.2" font-size="13" fill="#6f6a6b" stroke="#6f6a6b" stroke-width="0.28" text-anchor="start" textLength="68.4" lengthAdjust="spacingAndGlyphs">Inventory</text>
<text x="434.7" y="286" font-size="12.5" fill="#7f7a7b" text-anchor="end" textLength="50.7" lengthAdjust="spacingAndGlyphs">Apr 2022</text>
<text x="434.5" y="312.2" font-size="26" fill="#3c1e3b" text-anchor="end" textLength="71.8" lengthAdjust="spacingAndGlyphs">78.8m</text>
<text x="899.7" y="286" font-size="12.5" fill="#7f7a7b" text-anchor="start" textLength="52.9" lengthAdjust="spacingAndGlyphs">Mar 2023</text>
<text x="900.3" y="312.2" font-size="26" fill="#3c1e3b" text-anchor="start" textLength="70.9" lengthAdjust="spacingAndGlyphs">59.6m</text>
<rect x="899" y="320" width="52.2" height="19.2" rx="9.6" fill="#06a14f"/>
<path d="M908.4 327.6h8.3l-4.15 4.9z" fill="#fff"/>
<text x="921" y="334.3" font-size="11" fill="#fff" font-weight="700" text-anchor="start">24%</text>
<text x="1077.1999999999998" y="246.2" font-size="13" fill="#6f6a6b" stroke="#6f6a6b" stroke-width="0.28" text-anchor="start" textLength="63.3" lengthAdjust="spacingAndGlyphs">Demand</text>
<text x="1174.5" y="286" font-size="12.5" fill="#7f7a7b" text-anchor="end" textLength="50.7" lengthAdjust="spacingAndGlyphs">Apr 2022</text>
<text x="1174.3" y="312.2" font-size="26" fill="#3c1e3b" text-anchor="end" textLength="72" lengthAdjust="spacingAndGlyphs">26.1m</text>
<text x="1639.5" y="286" font-size="12.5" fill="#7f7a7b" text-anchor="start" textLength="52.9" lengthAdjust="spacingAndGlyphs">Mar 2023</text>
<text x="1640.1" y="312.2" font-size="26" fill="#3c1e3b" text-anchor="start" textLength="72" lengthAdjust="spacingAndGlyphs">29.9m</text>
<text x="337.4" y="441.54999999999995" font-size="13" fill="#6f6a6b" stroke="#6f6a6b" stroke-width="0.28" text-anchor="start" textLength="52.5" lengthAdjust="spacingAndGlyphs">Fill rate</text>
<text x="434.7" y="481.35" font-size="12.5" fill="#7f7a7b" text-anchor="end" textLength="50.7" lengthAdjust="spacingAndGlyphs">Apr 2022</text>
<text x="434.5" y="507.54999999999995" font-size="26" fill="#3c1e3b" text-anchor="end" textLength="70.4" lengthAdjust="spacingAndGlyphs">93.0%</text>
<text x="899.7" y="481.35" font-size="12.5" fill="#7f7a7b" text-anchor="start" textLength="52.9" lengthAdjust="spacingAndGlyphs">Mar 2023</text>
<text x="900.3" y="507.54999999999995" font-size="26" fill="#3c1e3b" text-anchor="start" textLength="69.6" lengthAdjust="spacingAndGlyphs">94.1%</text>
<rect x="899" y="515.35" width="42.4" height="19.2" rx="9.6" fill="#06a14f"/>
<path d="M908.4 527.85h8.3l-4.15 -4.9z" fill="#fff"/>
<text x="921" y="529.65" font-size="11" fill="#fff" font-weight="700" text-anchor="start">1%</text>
<text x="1077.1999999999998" y="441.54999999999995" font-size="13" fill="#6f6a6b" stroke="#6f6a6b" stroke-width="0.28" text-anchor="start" textLength="165.3" lengthAdjust="spacingAndGlyphs">Recommended orders</text>
<text x="1174.5" y="481.35" font-size="12.5" fill="#7f7a7b" text-anchor="end" textLength="50.7" lengthAdjust="spacingAndGlyphs">Apr 2022</text>
<text x="1174.3" y="507.54999999999995" font-size="26" fill="#3c1e3b" text-anchor="end" textLength="72" lengthAdjust="spacingAndGlyphs">37.9m</text>
<text x="1639.5" y="481.35" font-size="12.5" fill="#7f7a7b" text-anchor="start" textLength="52.9" lengthAdjust="spacingAndGlyphs">Mar 2023</text>
<text x="1640.1" y="507.54999999999995" font-size="26" fill="#3c1e3b" text-anchor="start" textLength="72" lengthAdjust="spacingAndGlyphs">29.9m</text>
<rect x="1638.8" y="515.35" width="49.5" height="19.2" rx="9.6" fill="#06a14f"/>
<path d="M1648.2 522.95h8.3l-4.15 4.9z" fill="#fff"/>
<text x="1660.8" y="529.65" font-size="11" fill="#fff" font-weight="700" text-anchor="start">21%</text>
<text x="337.4" y="636.9" font-size="13" fill="#6f6a6b" stroke="#6f6a6b" stroke-width="0.28" text-anchor="start" textLength="81.4" lengthAdjust="spacingAndGlyphs">Stock turns</text>
<text x="434.7" y="676.7" font-size="12.5" fill="#7f7a7b" text-anchor="end" textLength="50.7" lengthAdjust="spacingAndGlyphs">Apr 2022</text>
<text x="434.5" y="702.9" font-size="26" fill="#3c1e3b" text-anchor="end" textLength="34.4" lengthAdjust="spacingAndGlyphs">3.4</text>
<text x="899.7" y="676.7" font-size="12.5" fill="#7f7a7b" text-anchor="start" textLength="52.9" lengthAdjust="spacingAndGlyphs">Mar 2023</text>
<text x="900.3" y="702.9" font-size="26" fill="#3c1e3b" text-anchor="start" textLength="34.4" lengthAdjust="spacingAndGlyphs">4.9</text>
<rect x="899" y="710.7" width="52" height="19.2" rx="9.6" fill="#06a14f"/>
<path d="M908.4 723.2h8.3l-4.15 -4.9z" fill="#fff"/>
<text x="921" y="725.0" font-size="11" fill="#fff" font-weight="700" text-anchor="start">45%</text>
<text x="1077.1999999999998" y="636.9" font-size="13" fill="#6f6a6b" stroke="#6f6a6b" stroke-width="0.28" text-anchor="start" textLength="62.6" lengthAdjust="spacingAndGlyphs">Receipts</text>
<text x="1174.5" y="676.7" font-size="12.5" fill="#7f7a7b" text-anchor="end" textLength="50.7" lengthAdjust="spacingAndGlyphs">Apr 2022</text>
<text x="1174.3" y="702.9" font-size="26" fill="#3c1e3b" text-anchor="end" textLength="72" lengthAdjust="spacingAndGlyphs">55.8m</text>
<text x="1639.5" y="676.7" font-size="12.5" fill="#7f7a7b" text-anchor="start" textLength="52.9" lengthAdjust="spacingAndGlyphs">Mar 2023</text>
<text x="1640.1" y="702.9" font-size="26" fill="#3c1e3b" text-anchor="start" textLength="71" lengthAdjust="spacingAndGlyphs">29.2m</text>
<rect x="1638.8" y="710.7" width="52.6" height="19.2" rx="9.6" fill="#06a14f"/>
<path d="M1648.2 718.3000000000001h8.3l-4.15 4.9z" fill="#fff"/>
<text x="1660.8" y="725.0" font-size="11" fill="#fff" font-weight="700" text-anchor="start">48%</text>
</svg>
<div class="abs redbox" id="rb1"></div>
<div class="abs redbox" id="rb2"></div>
</body></html>
